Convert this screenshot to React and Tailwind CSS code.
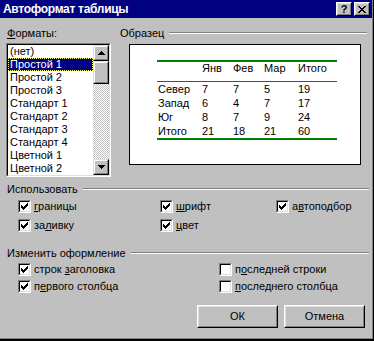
import React from "react";

const formats = [
  "(нет)",
  "Простой 1",
  "Простой 2",
  "Простой 3",
  "Стандарт 1",
  "Стандарт 2",
  "Стандарт 3",
  "Стандарт 4",
  "Цветной 1",
  "Цветной 2",
];

const rows = [
  ["Север", "7", "7", "5", "19"],
  ["Запад", "6", "4", "7", "17"],
  ["Юг", "8", "7", "9", "24"],
  ["Итого", "21", "18", "21", "60"],
];

// pixel check mark, 7x7
const Check = () => (
  <svg width="7" height="7" viewBox="0 0 7 7" shapeRendering="crispEdges">
    {[2, 3, 4, 3, 2, 1, 0].map((y, x) => (
      <rect key={x} x={x} y={y} width="1" height="3" fill="#000" />
    ))}
  </svg>
);

const CloseGlyph = () => (
  <svg width="8" height="7" viewBox="0 0 8 7" shapeRendering="crispEdges">
    {[
      [0, 0], [1, 0], [6, 0], [7, 0],
      [1, 1], [2, 1], [5, 1], [6, 1],
      [2, 2], [3, 2], [4, 2], [5, 2],
      [3, 3], [4, 3],
      [2, 4], [3, 4], [4, 4], [5, 4],
      [1, 5], [2, 5], [5, 5], [6, 5],
      [0, 6], [1, 6], [6, 6], [7, 6],
    ].map(([x, y]) => (
      <rect key={x + "-" + y} x={x} y={y} width="1" height="1" fill="#000" />
    ))}
  </svg>
);

const Arrow = ({ down }) => (
  <svg width="7" height="4" viewBox="0 0 7 4" shapeRendering="crispEdges">
    {[0, 1, 2, 3].map((i) => (
      <rect
        key={i}
        x={down ? i : 3 - i}
        y={i}
        width={down ? 7 - i * 2 : 1 + i * 2}
        height="1"
        fill="#000"
      />
    ))}
  </svg>
);

function TitleButton({ children }) {
  return (
    <div className="w-[16px] h-[14px] border border-t-white border-l-white border-r-black border-b-black">
      <div className="h-full bg-[#c0c0c0] flex items-center justify-center border border-t-[#dfdfdf] border-l-[#dfdfdf] border-r-[#808080] border-b-[#808080]">
        {children}
      </div>
    </div>
  );
}

function ScrollPart({ className = "", children }) {
  return (
    <div className={"border border-t-[#dfdfdf] border-l-[#dfdfdf] border-r-black border-b-black " + className}>
      <div className="h-full bg-[#c0c0c0] flex items-center justify-center border border-t-white border-l-white border-r-[#808080] border-b-[#808080]">
        {children}
      </div>
    </div>
  );
}

function CheckBox({ checked }) {
  return (
    <div className="w-[13px] h-[13px] shrink-0 border border-t-[#808080] border-l-[#808080] border-r-white border-b-white">
      <div className="h-full bg-white flex items-center justify-center border border-t-black border-l-black border-r-[#dfdfdf] border-b-[#dfdfdf]">
        {checked && <Check />}
      </div>
    </div>
  );
}

function Option({ checked, pre = "", u, post = "", h = "h-[19px]" }) {
  return (
    <div className={"flex items-center gap-[3px] " + h}>
      <CheckBox checked={checked} />
      <span className="whitespace-nowrap">
        {pre}
        <u className="underline-offset-[1px]">{u}</u>
        {post}
      </span>
    </div>
  );
}

function SectionHeader({ title }) {
  return (
    <div className="h-[13px] flex items-start">
      <span className="whitespace-nowrap">{title}</span>
      <div className="flex-1 ml-[5px] mt-[5px] border-t border-b border-t-[#808080] border-b-white" />
    </div>
  );
}

function Button({ children }) {
  return (
    <div className="w-[81px] h-[23px] border border-t-white border-l-white border-r-black border-b-black">
      <div className="h-full flex items-center justify-center border border-t-[#dfdfdf] border-l-[#dfdfdf] border-r-[#808080] border-b-[#808080]">
        {children}
      </div>
    </div>
  );
}

function ListBox() {
  return (
    <div className="h-[134px] border border-t-[#808080] border-l-[#808080] border-r-white border-b-white">
      <div className="h-full flex bg-white border border-t-black border-l-black border-r-[#dfdfdf] border-b-[#dfdfdf]">
        <div className="flex-1 overflow-hidden">
          {formats.map((f, i) =>
            i === 1 ? (
              <div
                key={f}
                className="h-[13px] leading-[11px] pl-[1px] bg-[#000080] text-white border border-dotted border-[#ffff80] whitespace-nowrap"
              >
                {f}
              </div>
            ) : (
              <div key={f} className="h-[13px] leading-[13px] pl-[2px] whitespace-nowrap">
                {f}
              </div>
            )
          )}
        </div>
        <div className="w-[16px] flex flex-col">
          <ScrollPart className="h-[16px]">
            <Arrow />
          </ScrollPart>
          <ScrollPart className="h-[23px]" />
          <div className="flex-1 bg-[image:repeating-conic-gradient(#c0c0c0_0%_25%,#ffffff_0%_50%)] bg-[length:2px_2px]" />
          <ScrollPart className="h-[16px]">
            <Arrow down />
          </ScrollPart>
        </div>
      </div>
    </div>
  );
}

function Preview() {
  return (
    <div className="ml-[27px] mt-[15px] w-[180px]">
      <div className="border-t-2 border-[#008000]" />
      <div className="grid grid-cols-[44px_31px_31px_34px_1fr] h-[19px] pl-[1px]">
        <span />
        <span>Янв</span>
        <span>Фев</span>
        <span>Мар</span>
        <span>Итого</span>
      </div>
      <div className="border-t border-[#008000]" />
      {rows.map((r) => (
        <div key={r[0]} className="grid grid-cols-[44px_31px_31px_34px_1fr] h-[14px] leading-[14px] pl-[1px]">
          {r.map((c, i) => (
            <span key={i}>{c}</span>
          ))}
        </div>
      ))}
      <div className="border-t-2 border-[#008000]" />
    </div>
  );
}

export default function App() {
  return (
    <div className="w-[374px] h-[341px] bg-[#c0c0c0] border-r border-b-2 border-black text-[11px] leading-[13px] text-black font-['Liberation_Sans',Arial,sans-serif] overflow-hidden select-none">
      <div className="h-full flex flex-col border-r border-b border-[#808080]">
        {/* Title bar */}
        <div className="h-[18px] shrink-0 bg-[#000080] flex items-center justify-between pl-[3px] pr-[2px]">
          <span className="text-white font-bold text-[12px] tracking-[-0.3px] leading-[18px] whitespace-nowrap">
            Автоформат таблицы
          </span>
          <div className="flex gap-[2px]">
            <TitleButton>
              <span className="font-bold text-[11px] leading-[10px]">?</span>
            </TitleButton>
            <TitleButton>
              <CloseGlyph />
            </TitleButton>
          </div>
        </div>

        {/* Formats + sample */}
        <div className="flex pt-[9px] pl-[6px]">
          <div className="w-[105px] shrink-0">
            <div className="h-[16px] pl-[1px]">
              <u className="underline-offset-[1px]">Ф</u>орматы:
            </div>
            <ListBox />
          </div>
          <div className="ml-[9px] w-[247px]">
            <div className="h-[17px]">
              <SectionHeader title="Образец" />
            </div>
            <div className="ml-[9px] w-[232px] h-[121px] bg-white border border-black">
              <Preview />
            </div>
          </div>
        </div>

        {/* Использовать */}
        <div className="mt-[6px] pl-[7px] pr-[3px]">
          <SectionHeader title="Использовать" />
          <div className="grid grid-cols-[142px_116px_1fr] pl-[11px] mt-[1px]">
            <Option checked u="г" post="раницы" />
            <Option checked u="ш" post="рифт" />
            <Option checked pre="а" u="в" post="топодбор" />
            <Option checked pre="за" u="л" post="ивку" />
            <Option checked u="ц" post="вет" />
          </div>
        </div>

        {/* Изменить оформление */}
        <div className="mt-[12px] pl-[7px] pr-[3px]">
          <SectionHeader title="Изменить оформление" />
          <div className="grid grid-cols-[201px_1fr] pl-[11px] mt-[1px]">
            <Option checked h="h-[17px]" pre="строк " u="з" post="аголовка" />
            <Option h="h-[17px]" pre="п" u="о" post="следней строки" />
            <Option checked h="h-[17px]" pre="п" u="е" post="рвого столбца" />
            <Option h="h-[17px]" u="п" post="оследнего столбца" />
          </div>
        </div>

        {/* Buttons */}
        <div className="mt-[10px] flex justify-end gap-[6px] pr-[7px]">
          <Button>ОК</Button>
          <Button>Отмена</Button>
        </div>
      </div>
    </div>
  );
}
